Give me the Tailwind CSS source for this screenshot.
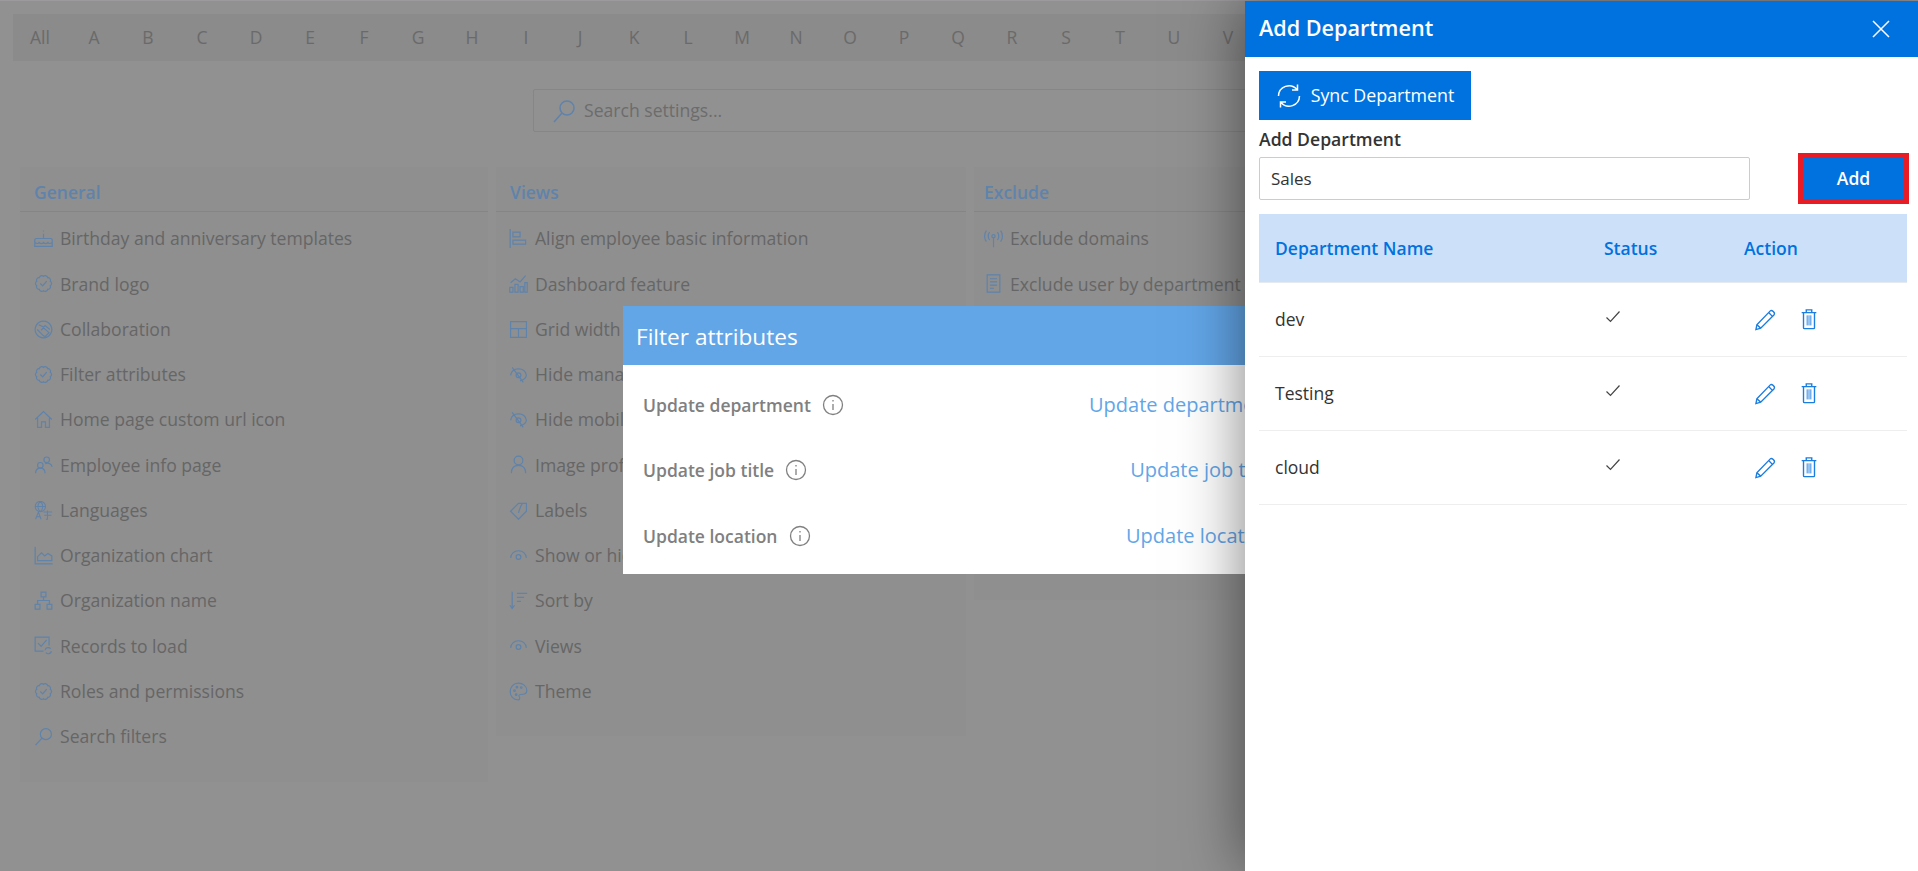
<!DOCTYPE html>
<html lang="en">
<head>
  <meta charset="UTF-8">
  <title>Settings - Add Department</title>
  <script src="https://cdn.jsdelivr.net/npm/@tailwindcss/browser@4"></script>
</head>
<body class="bg-[#919191] font-['Open_Sans','Noto_Sans',sans-serif] overflow-hidden">

  <!-- shared icons -->
  <svg class="absolute w-0 h-0">
    <symbol id="i-badge" viewBox="0 0 24 24" fill="none" stroke="currentColor" stroke-width="1.5"><path d="M12 3A3.200 3.200 0 0117.290 4.720 3.200 3.200 0 0120.560 9.220 3.200 3.200 0 0120.560 14.780 3.200 3.200 0 0117.290 19.280 3.200 3.200 0 0112 21 3.200 3.200 0 016.710 19.280 3.200 3.200 0 013.440 14.780 3.200 3.200 0 013.440 9.220 3.200 3.200 0 016.710 4.720 3.200 3.200 0 0112 3z"/><path d="M8 12l3 3 5-6"/></symbol>
    <symbol id="i-search" viewBox="0 0 24 24" fill="none" stroke="currentColor" stroke-width="1.5"><circle cx="15" cy="9" r="7"/><path d="M10 14L2 23"/></symbol>
    <symbol id="i-eye" viewBox="0 0 24 24" fill="none" stroke="currentColor" stroke-width="1.5"><path d="M2 15C3 9 7 6 12 6s9 3 10 9"/><circle cx="12" cy="14" r="3"/></symbol>
    <symbol id="i-eyeoff" viewBox="0 0 24 24" fill="none" stroke="currentColor" stroke-width="1.5"><path d="M2 13C3 8 7 5 12 5s9 3 10 8c-1 4-4 6-8 7"/><circle cx="12" cy="13" r="3"/><path d="M4 3l14 19"/></symbol>
    <symbol id="i-info" viewBox="0 0 22 22" fill="none" stroke="currentColor" stroke-width="1.300"><circle cx="11" cy="11" r="9.500"/><path d="M11 10v6M11 6v1.500"/></symbol>
    <symbol id="i-check" viewBox="0 0 16 16" fill="none" stroke="currentColor" stroke-width="1.200"><path d="M1.500 8.500l4 4 9-10"/></symbol>
    <symbol id="i-edit" viewBox="0 0 24 24" fill="none" stroke="currentColor" stroke-width="1.400"><path d="M3 17.500L17 3c1.500-1.500 5.500 2 4 4L7 21l-5 1.500z"/><path d="M3 17.500L7 21M15.500 5l4 4"/></symbol>
    <symbol id="i-trash" viewBox="0 0 24 24" fill="none" stroke="currentColor" stroke-width="1.500"><path d="M4 5h16M9 5V2h6v3M6 5v16.500a1 1 0 001 1h10a1 1 0 001-1V5"/><path d="M10 8v11M12 8v11M14 8v11" stroke-width="1"/></symbol>
  </svg>

  <!-- dimmed settings page -->
  <div class="h-[871px] border-t border-[#9c9a9c] pt-[13px]">
    <div class="flex ml-[13px] h-[47px] items-center bg-[#8b8b8b] text-[#6a6a6a] text-[17.5px] [&>span]:w-[54px] [&>span]:text-center [&>span]:shrink-0">
      <span>All</span><span>A</span><span>B</span><span>C</span><span>D</span><span>E</span><span>F</span><span>G</span><span>H</span><span>I</span><span>J</span><span>K</span><span>L</span><span>M</span><span>N</span><span>O</span><span>P</span><span>Q</span><span>R</span><span>S</span><span>T</span><span>U</span><span>V</span>
    </div>

    <div class="flex items-center gap-[8px] ml-[533px] mt-[28px] w-[852px] h-[43px] pl-[18px] border border-[#868686] rounded-[2px] text-[#6c6c6c] text-[17.6px]">
      <svg class="w-[24px] h-[24px] text-[#5f83ab]"><use href="#i-search"/></svg>
      <span>Search settings...</span>
    </div>

    <div class="grid grid-cols-[468px_470px_470px] gap-x-[8px] items-start ml-[20px] mt-[35px] text-[#666] text-[17.6px]">
      <section class="h-[615px] bg-[#8f8f8f]">
        <h2 class="h-[45px] pt-[6px] pl-[14px] flex items-center border-b border-[#858585] text-[#5f83ab] font-semibold text-[17.5px]">General</h2>
        <ul class="pt-[4px] pl-[14px] [&>li]:h-[45.25px] [&>li]:flex [&>li]:items-center [&>li]:gap-[7px] [&_svg]:w-[19px] [&_svg]:h-[19px] [&_svg]:shrink-0 [&_svg]:text-[#5f83ab] [&_svg]:fill-none [&_svg]:stroke-current">
          <li><svg viewBox="0 0 24 24" stroke-width="1.500"><path d="M1 22h22v-8a2 2 0 00-2-2H3a2 2 0 00-2 2zM1 17c3 2 4 2 5.500 0 2 2 3.500 2 5.500 0 2 2 3.500 2 5.500 0 1.500 2 2.500 2 5.500 0M12 12V6M12 2v1"/></svg>Birthday and anniversary templates</li>
          <li><svg><use href="#i-badge"/></svg>Brand logo</li>
          <li><svg viewBox="0 0 24 24" stroke-width="1.500"><path d="M12 1.500a10.500 10.500 0 11-.1 0zM6 6l6 3 2-2 6 5M4 12l8 8 2 1 5-5-7-6-3 3"/></svg>Collaboration</li>
          <li><svg><use href="#i-badge"/></svg>Filter attributes</li>
          <li><svg viewBox="0 0 24 24" stroke-width="1.500"><path d="M1.500 12L12 2l10.500 10M4.500 10v12h5v-7h5v7h5V10"/></svg>Home page custom url icon</li>
          <li><svg viewBox="0 0 24 24" stroke-width="1.500"><circle cx="16" cy="6" r="3.500"/><circle cx="8" cy="13" r="3.500"/><path d="M2 23c0-4 2-6.500 6-6.500s6 2.500 6 6.500M14 11c4-1.500 8 0 9 4"/></svg>Employee info page</li>
          <li><svg viewBox="0 0 24 24" stroke-width="1.300"><circle cx="8" cy="7" r="6.500"/><path d="M1.500 7h13M8 .5c-4 4-4 9 0 13M8 .5c4 4 4 9 0 13M2 23l3.500-9 3.500 9M3.300 20h4.500M12 14h11M17 12v11l-2 0M13 18h9"/></svg>Languages</li>
          <li><svg viewBox="0 0 24 24" stroke-width="1.500"><path d="M1.500 1v21.500h22M4.500 18.500v-5l5-5 4 4 4-3 5 3v6z"/></svg>Organization chart</li>
          <li><svg viewBox="0 0 24 24" stroke-width="1.500"><path d="M9 1.500h6v6H9zM1.500 17h6v6h-6zM16.500 17h6v6h-6zM12 7.500V12M4.500 17v-5h15v5"/></svg>Organization name</li>
          <li><svg viewBox="0 0 24 24" stroke-width="1.500"><path d="M12 19H1.500V1.500H19V12M5 9l4 4 7-8M14 18a4 4 0 017-2M22 19a4 4 0 01-7 2"/></svg>Records to load</li>
          <li><svg><use href="#i-badge"/></svg>Roles and permissions</li>
          <li><svg><use href="#i-search"/></svg>Search filters</li>
        </ul>
      </section>

      <section class="h-[569px] bg-[#8f8f8f]">
        <h2 class="h-[45px] pt-[6px] pl-[14px] flex items-center border-b border-[#858585] text-[#5f83ab] font-semibold text-[17.5px]">Views</h2>
        <ul class="pt-[4px] pl-[13px] [&>li]:h-[45.25px] [&>li]:flex [&>li]:items-center [&>li]:gap-[7px] [&_svg]:w-[19px] [&_svg]:h-[19px] [&_svg]:shrink-0 [&_svg]:text-[#5f83ab] [&_svg]:fill-none [&_svg]:stroke-current">
          <li><svg viewBox="0 0 24 24" stroke-width="1.500"><path d="M1.500 0v24M5 4h9v6H5zM5 14h16v5H5z"/></svg>Align employee basic information</li>
          <li><svg viewBox="0 0 24 24" stroke-width="1.500"><path d="M1 17h4v6H1zM7.500 13h4v10h-4zM14 16h4v7h-4zM20 11h3v12h-3zM2 11l6-5 6 4 7-8"/></svg>Dashboard feature</li>
          <li><svg viewBox="0 0 24 24" stroke-width="1.500"><path d="M2 2h20v20H2zM2 11h20M12 11v11"/></svg>Grid width</li>
          <li><svg><use href="#i-eyeoff"/></svg>Hide manager</li>
          <li><svg><use href="#i-eyeoff"/></svg>Hide mobile</li>
          <li><svg viewBox="0 0 24 24" stroke-width="1.500"><circle cx="12" cy="7" r="5.500"/><path d="M3 23c0-6 3-10 9-10s9 4 9 10"/></svg>Image profile</li>
          <li><svg viewBox="0 0 24 24" stroke-width="1.500"><path d="M2 13L12 3h10v10L12 23zM17 3c-3 4-4 8-5 12"/></svg>Labels</li>
          <li><svg><use href="#i-eye"/></svg>Show or hide</li>
          <li><svg viewBox="0 0 24 24" stroke-width="1.500"><path d="M4 1v21M1 18l3 4 3-4M10 3h13M10 8h9M10 13h5"/></svg>Sort by</li>
          <li><svg><use href="#i-eye"/></svg>Views</li>
          <li><svg viewBox="0 0 24 24" stroke-width="1.500"><path d="M12 1.500C5 1.500 1.500 7 1.500 12c0 6 4 10.500 10 10.500 3 0 2-3 1-5 0-2 3-2 5-2 3 0 5-2 5-5C22.500 5 17 1.500 12 1.500z"/><circle cx="7" cy="11" r="1"/><circle cx="10" cy="6.500" r="1"/><circle cx="15.500" cy="7" r="1"/><circle cx="9" cy="16" r="1"/></svg>Theme</li>
        </ul>
      </section>

      <section class="h-[433px] bg-[#8f8f8f]">
        <h2 class="h-[45px] pt-[6px] pl-[10px] flex items-center border-b border-[#858585] text-[#5f83ab] font-semibold text-[17.5px]">Exclude</h2>
        <ul class="pt-[4px] pl-[10px] [&>li]:h-[45.25px] [&>li]:flex [&>li]:items-center [&>li]:gap-[7px] [&>li]:whitespace-nowrap [&_svg]:w-[19px] [&_svg]:h-[19px] [&_svg]:shrink-0 [&_svg]:text-[#5f83ab] [&_svg]:fill-none [&_svg]:stroke-current">
          <li><svg viewBox="0 0 24 24" stroke-width="1.500"><circle cx="12" cy="9" r="2"/><path d="M12 11v12M7 4c-2 3-2 7 0 10M17 4c2 3 2 7 0 10M3 2c-3 4-3 10 0 14M21 2c3 4 3 10 0 14"/></svg>Exclude domains</li>
          <li><svg viewBox="0 0 24 24" stroke-width="1.500"><path d="M4 1h16v22H4zM7.500 6h9M7.500 10h9M7.500 14h9M7.500 18h5"/></svg>Exclude user by department</li>
        </ul>
      </section>
    </div>
  </div>

  <!-- filter attributes dialog, behind the side panel -->
  <div class="absolute left-[623px] top-[306px] w-[671px] h-[268px] bg-white">
    <h2 class="h-[59px] pl-[13px] pt-[2px] flex items-center bg-[#62a6e8] text-white text-[22.6px]">Filter attributes</h2>
    <div class="pt-[7px] px-[20px] text-[#808080]">
      <div class="flex items-center justify-between h-[65.5px]">
        <span class="flex items-center gap-[11px] font-semibold text-[17.5px]">Update department <svg class="w-[22px] h-[22px]"><use href="#i-info"/></svg></span>
        <a class="text-[#62a6e8] text-[20px]">Update department</a>
      </div>
      <div class="flex items-center justify-between h-[65.5px]">
        <span class="flex items-center gap-[11px] font-semibold text-[17.5px]">Update job title <svg class="w-[22px] h-[22px]"><use href="#i-info"/></svg></span>
        <a class="text-[#62a6e8] text-[20px]">Update job title</a>
      </div>
      <div class="flex items-center justify-between h-[65.5px]">
        <span class="flex items-center gap-[11px] font-semibold text-[17.5px]">Update location <svg class="w-[22px] h-[22px]"><use href="#i-info"/></svg></span>
        <a class="text-[#62a6e8] text-[20px]">Update location</a>
      </div>
    </div>
  </div>

  <!-- add department side panel -->
  <aside class="absolute right-0 top-[1px] bottom-0 w-[673px] bg-white shadow-[0_0_60px_rgba(0,0,0,0.5)] text-[#333]">
    <header class="h-[56px] pl-[14px] pr-[28px] flex items-center justify-between bg-[#0072df] text-white">
      <h1 class="font-semibold text-[21.6px] -mt-[2px]">Add Department</h1>
      <svg class="w-[18px] h-[18px]" viewBox="0 0 18 18" fill="none" stroke="currentColor" stroke-width="1.500"><path d="M1 1l16 16M17 1L1 17"/></svg>
    </header>
    <div class="pt-[14px] pl-[14px] pr-[11px]">
      <button class="w-[212px] h-[49px] flex items-center justify-center gap-[9px] bg-[#0072df] text-white text-[17.8px]">
        <svg class="w-[26px] h-[26px]" viewBox="0 0 26 26" fill="none" stroke="currentColor" stroke-width="1.500"><path d="M2.500 13A10.500 10.500 0 0121 6.500M23.500 13A10.500 10.500 0 015 19.500M21.500 1.500v5.500h-5.500M4.500 24.500V19h5.500"/></svg>
        Sync Department
      </button>
      <label class="block mt-[5px] h-[29px] font-semibold text-[17.6px] leading-[29px] text-[#333]">Add Department</label>
      <div class="flex items-center justify-between h-[51px] -mt-[1px]">
        <input class="w-[491px] h-[43px] pl-[11px] border border-[#ccc] rounded-[2px] text-[17px] text-[#333]" value="Sales">
        <button class="w-[111px] h-[51px] -mr-[2px] border-[5px] border-[#e81c24] bg-[#0072df] text-white font-semibold text-[17.5px]">Add</button>
      </div>
      <table class="w-[648px] mt-[10px] table-fixed text-left text-[17.5px]">
        <thead>
          <tr class="h-[68px] bg-[#cce1f9] text-[#0072df] border-b border-[#e4eaf0]">
            <th class="w-[345px] pl-[16px] font-semibold">Department Name</th>
            <th class="w-[140px] pl-[0px] font-semibold">Status</th>
            <th class="font-semibold">Action</th>
          </tr>
        </thead>
        <tbody>
          <tr class="h-[74px] border-b border-[#eeeeee]">
            <td class="pl-[16px]">dev</td>
            <td class="pl-[0px]"><svg class="w-[16px] h-[16px] ml-[1px] -mt-[5px] text-[#444]"><use href="#i-check"/></svg></td>
            <td><div class="flex gap-[21px] ml-[10px] text-[#1a7de0]"><svg class="w-[23px] h-[23px]"><use href="#i-edit"/></svg><svg class="w-[22px] h-[22px]"><use href="#i-trash"/></svg></div></td>
          </tr>
          <tr class="h-[74px] border-b border-[#eeeeee]">
            <td class="pl-[16px]">Testing</td>
            <td class="pl-[0px]"><svg class="w-[16px] h-[16px] ml-[1px] -mt-[5px] text-[#444]"><use href="#i-check"/></svg></td>
            <td><div class="flex gap-[21px] ml-[10px] text-[#1a7de0]"><svg class="w-[23px] h-[23px]"><use href="#i-edit"/></svg><svg class="w-[22px] h-[22px]"><use href="#i-trash"/></svg></div></td>
          </tr>
          <tr class="h-[74px] border-b border-[#eeeeee]">
            <td class="pl-[16px]">cloud</td>
            <td class="pl-[0px]"><svg class="w-[16px] h-[16px] ml-[1px] -mt-[5px] text-[#444]"><use href="#i-check"/></svg></td>
            <td><div class="flex gap-[21px] ml-[10px] text-[#1a7de0]"><svg class="w-[23px] h-[23px]"><use href="#i-edit"/></svg><svg class="w-[22px] h-[22px]"><use href="#i-trash"/></svg></div></td>
          </tr>
        </tbody>
      </table>
    </div>
  </aside>

</body>
</html>
